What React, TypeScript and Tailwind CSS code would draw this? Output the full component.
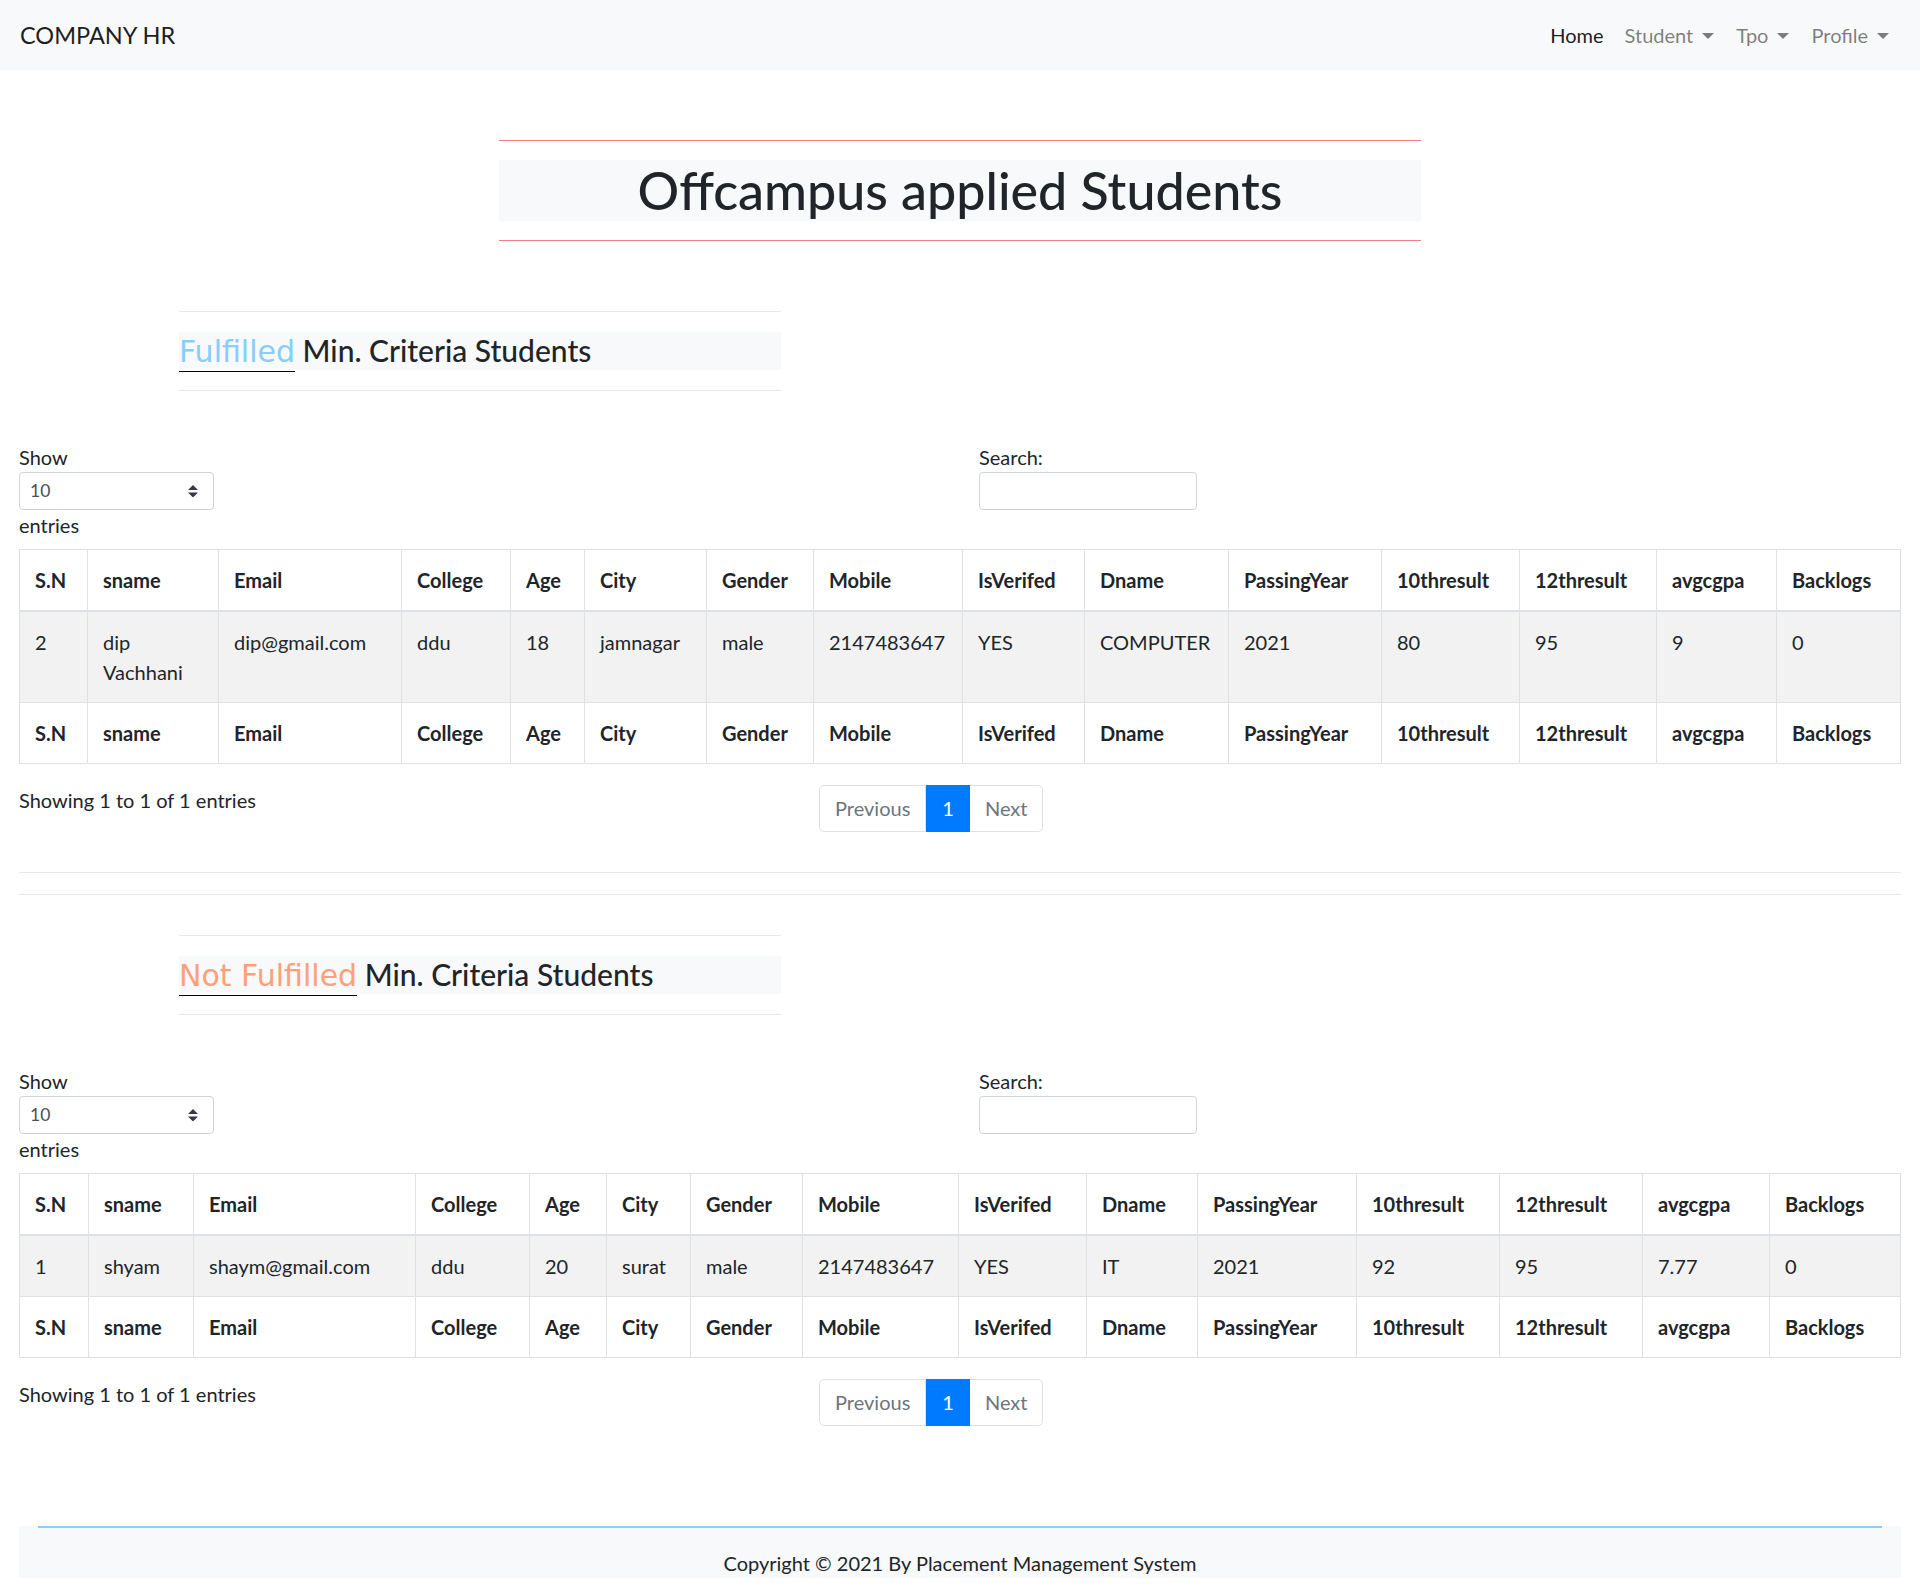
import React from "react";

const COLS = [
  "S.N",
  "sname",
  "Email",
  "College",
  "Age",
  "City",
  "Gender",
  "Mobile",
  "IsVerifed",
  "Dname",
  "PassingYear",
  "10thresult",
  "12thresult",
  "avgcgpa",
  "Backlogs",
];

const WIDTHS_FULFILLED = [
  "w-[68px]",
  "w-[131px]",
  "w-[183px]",
  "w-[109px]",
  "w-[74px]",
  "w-[122px]",
  "w-[107px]",
  "w-[149px]",
  "w-[122px]",
  "w-[144px]",
  "w-[153px]",
  "w-[138px]",
  "w-[137px]",
  "w-[120px]",
  "",
];

const WIDTHS_NOT = [
  "w-[69px]",
  "w-[105px]",
  "w-[222px]",
  "w-[114px]",
  "w-[77px]",
  "w-[84px]",
  "w-[112px]",
  "w-[156px]",
  "w-[128px]",
  "w-[111px]",
  "w-[159px]",
  "w-[143px]",
  "w-[143px]",
  "w-[127px]",
  "",
];

const fulfilledRows = [
  ["2", "dip Vachhani", "dip@gmail.com", "ddu", "18", "jamnagar", "male", "2147483647", "YES", "COMPUTER", "2021", "80", "95", "9", "0"],
];

const notFulfilledRows = [
  ["1", "shyam", "shaym@gmail.com", "ddu", "20", "surat", "male", "2147483647", "YES", "IT", "2021", "92", "95", "7.77", "0"],
];

function Caret() {
  return (
    <span className="ml-[9px] inline-block h-0 w-0 border-x-[6px] border-t-[6px] border-x-transparent border-t-black/50 align-[4px]" />
  );
}

function Navbar() {
  return (
    <nav className="flex h-[70px] items-center justify-between bg-[#f8f9fa] px-[20px]">
      <span className="text-[23.5px] leading-[37px] text-black/90">COMPANY HR</span>
      <ul className="flex">
        <li className="px-[10px] text-black/90">Home</li>
        <li className="px-[11px] text-black/50">
          Student
          <Caret />
        </li>
        <li className="px-[11px] text-black/50">
          Tpo
          <Caret />
        </li>
        <li className="px-[11px] text-black/50">
          Profile
          <Caret />
        </li>
      </ul>
    </nav>
  );
}

function SectionTitle({ label, color }: { label: string; color: string }) {
  return (
    <div className="ml-[160px] w-[602px]">
      <hr className="border-[#e6e6e6]" />
      <h4 className="mt-[20px] bg-[#f8f9fa] text-[30px] leading-[36px] font-medium">
        <span className={`border-b border-black pb-[2px] font-['DejaVu_Sans',sans-serif] font-normal ${color}`}>
          {label}
        </span>{" "}
        Min. Criteria Students
      </h4>
      <hr className="mt-[20px] border-[#e6e6e6]" />
    </div>
  );
}

function Controls() {
  return (
    <div className="flex">
      <div className="w-1/2">
        <div>Show</div>
        <div className="flex h-[38px] w-[195px] items-center justify-between rounded-[4px] border border-[#ced4da] bg-white pl-[10px] pr-[15px] text-[17.5px] text-[#495057]">
          <span>10</span>
          <svg width="10" height="12.5" viewBox="0 0 4 5">
            <path d="M2 0L0 2h4zm0 5L0 3h4z" fill="#343a40" />
          </svg>
        </div>
        <div>entries</div>
      </div>
      <div className="w-1/2 pl-[19px]">
        <div>Search:</div>
        <div className="h-[38px] w-[218px] rounded-[4px] border border-[#ced4da] bg-white" />
      </div>
    </div>
  );
}

function DataTable({ widths, rows }: { widths: string[]; rows: string[][] }) {
  return (
    <table className="mt-[9px] w-full table-fixed border-collapse border border-[#dee2e6]">
      <colgroup>
        {widths.map((w, i) => (
          <col key={i} className={w} />
        ))}
      </colgroup>
      <thead>
        <tr>
          {COLS.map((c) => (
            <th
              key={c}
              className="border border-b-2 border-[#dee2e6] p-[15px] text-left align-bottom font-bold"
            >
              {c}
            </th>
          ))}
        </tr>
      </thead>
      <tbody>
        {rows.map((r, i) => (
          <tr key={i} className="bg-[#f2f2f2]">
            {r.map((v, j) => (
              <td key={j} className="border border-[#dee2e6] p-[15px] align-top">
                {v}
              </td>
            ))}
          </tr>
        ))}
      </tbody>
      <tfoot>
        <tr>
          {COLS.map((c) => (
            <th key={c} className="border border-[#dee2e6] p-[15px] text-left align-top font-bold">
              {c}
            </th>
          ))}
        </tr>
      </tfoot>
    </table>
  );
}

function Pager() {
  return (
    <div className="mt-[21px] flex">
      <div className="w-[800px]">Showing 1 to 1 of 1 entries</div>
      <ul className="flex leading-[25px]">
        <li className="rounded-l-[5px] border border-[#dee2e6] bg-white px-[15px] py-[10px] text-[#6c757d]">
          Previous
        </li>
        <li className="border border-[#007bff] bg-[#007bff] px-[15px] py-[10px] text-white">1</li>
        <li className="rounded-r-[5px] border border-l-0 border-[#dee2e6] bg-white px-[15px] py-[10px] text-[#6c757d]">
          Next
        </li>
      </ul>
    </div>
  );
}

export default function App() {
  return (
    <div className="bg-white pb-[19px] font-['Lato',sans-serif] text-[20px] leading-[30px] text-[#212529]">
      <Navbar />
      <div className="px-[19px]">
        <div className="mx-auto mt-[70px] w-[922px]">
          <hr className="border-[#f08080]" />
          <h1 className="mt-[19px] bg-[#f8f9fa] text-center text-[52px] leading-[61px] font-medium">
            Offcampus applied Students
          </h1>
          <hr className="mt-[19px] border-[#f08080]" />
        </div>

        <section className="mt-[70px]">
          <SectionTitle label="Fulfilled" color="text-[#87cefa]" />
          <div className="mt-[51px]">
            <Controls />
          </div>
          <DataTable widths={WIDTHS_FULFILLED} rows={fulfilledRows} />
          <Pager />
        </section>

        <hr className="mt-[40px] border-[#e6e6e6]" />
        <hr className="mt-[21px] border-[#e6e6e6]" />

        <section className="mt-[40px]">
          <SectionTitle label="Not Fulfilled" color="text-[#ffa07a]" />
          <div className="mt-[51px]">
            <Controls />
          </div>
          <DataTable widths={WIDTHS_NOT} rows={notFulfilledRows} />
          <Pager />
        </section>

        <footer className="mt-[100px] bg-[#f8f9fa] px-[19px]">
          <hr className="border-t-2 border-[#87cefa]" />
          <p className="mt-[20px] text-center">Copyright © 2021 By Placement Management System</p>
        </footer>
      </div>
    </div>
  );
}
